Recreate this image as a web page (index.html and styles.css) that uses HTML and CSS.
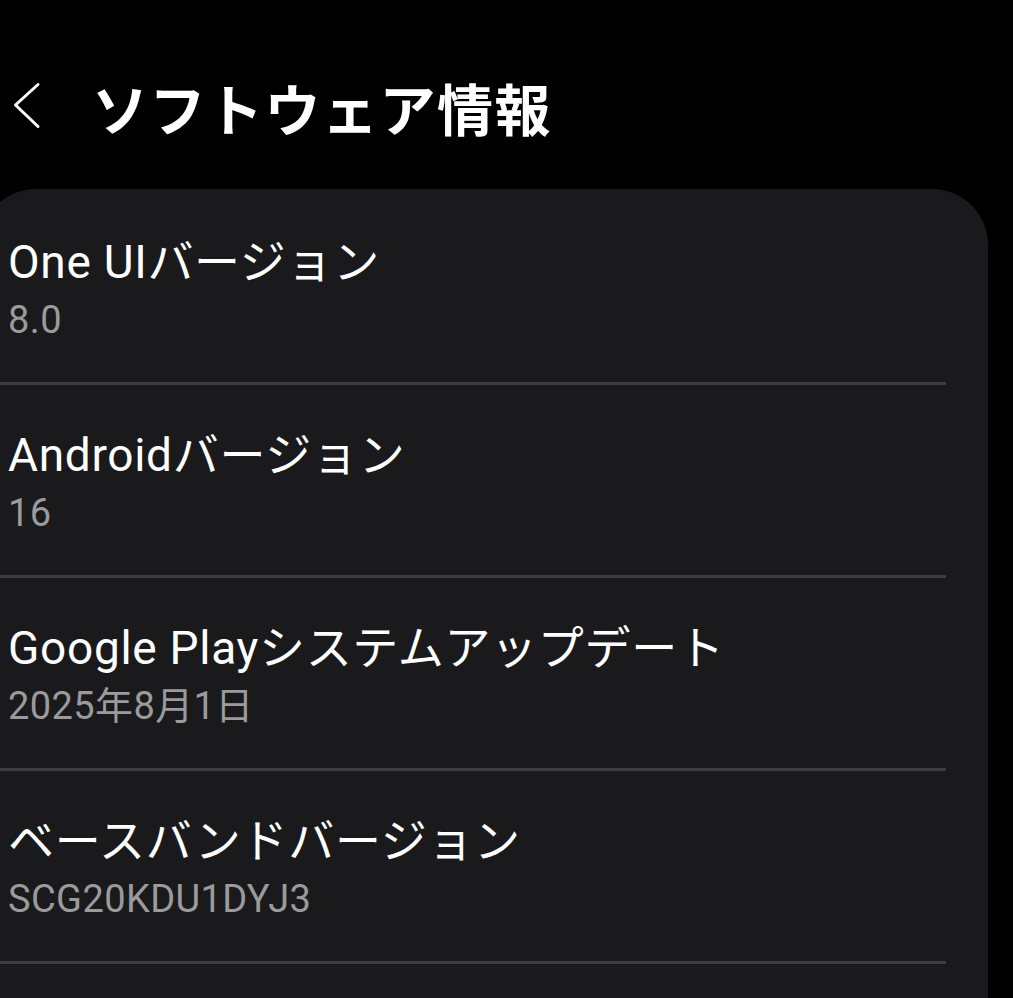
FILE: index.html
```html
<!DOCTYPE html>
<html lang="ja">
<head>
    <meta charset="UTF-8">
    <meta name="viewport" content="width=device-width, initial-scale=1.0">
    <title>ソフトウェア情報</title>
    <link rel="stylesheet" href="styles.css">
</head>
<body>
    <header class="top-bar">
        <span class="back-btn">
            <svg width="30" height="50" viewBox="0 0 30 50">
                <polyline points="26,4.5 3.5,25 26,46.5" fill="none" stroke="#fff" stroke-width="3" stroke-linecap="round" stroke-linejoin="round"/>
            </svg>
        </span>
        <h1>ソフトウェア情報</h1>
    </header>
    <div class="info-card">
        <div class="info-row">
            <p class="info-title">One UIバージョン</p>
            <p class="info-value">8.0</p>
        </div>
        <div class="info-row">
            <p class="info-title">Androidバージョン</p>
            <p class="info-value">16</p>
        </div>
        <div class="info-row">
            <p class="info-title">Google Playシステムアップデート</p>
            <p class="info-value">2025年8月1日</p>
        </div>
        <div class="info-row">
            <p class="info-title">ベースバンドバージョン</p>
            <p class="info-value">SCG20KDU1DYJ3</p>
        </div>
    </div>
</body>
</html>
```
FILE: styles.css
```css
body {
    font-family: Roboto, "Noto Sans CJK JP", sans-serif;
    background-color: #000;
    color: #fff;
    margin: 0;
    padding: 0;
    overflow: hidden;
}
.top-bar {
    height: 189px;
    display: flex;
    align-items: flex-start;
    box-sizing: border-box;
}
.back-btn {
    display: block;
    margin: 80px 0 0 12px;
    width: 30px;
    height: 50px;
}
.back-btn svg {
    display: block;
}
.top-bar h1 {
    margin: 69px 0 0 50px;
    font-family: "Noto Sans CJK JP", sans-serif;
    font-size: 56px;
    font-weight: 700;
    line-height: 76px;
    letter-spacing: 1.5px;
}
.info-card {
    background-color: #1a1a1c;
    border-radius: 56px;
    margin-left: -20px;
    width: 1008px;
    min-height: 900px;
    box-sizing: border-box;
    padding: 3px 42px 0 20px;
}
.info-row {
    height: 193px;
    box-sizing: border-box;
    padding: 42px 0 0 8px;
    border-bottom: 3px solid #3d3d3f;
}
.info-title {
    margin: 0;
    font-size: 46px;
    line-height: 56px;
    letter-spacing: 0.7px;
}
.info-value {
    margin: 6px 0 0;
    font-size: 38px;
    line-height: 48px;
    letter-spacing: 0.4px;
    color: #9b9b9d;
}
```
